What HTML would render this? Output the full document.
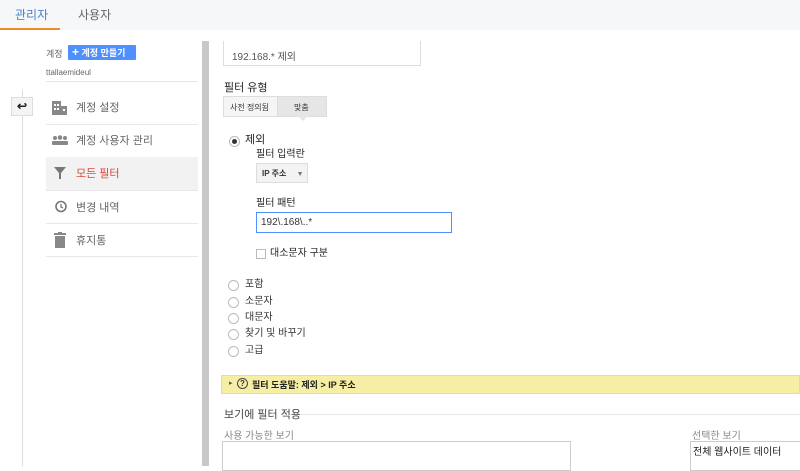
<!DOCTYPE html>
<html><head><meta charset="utf-8"><style>
*{box-sizing:border-box;margin:0;padding:0}
body{width:800px;height:466px;overflow:hidden;background:#fff;font-family:"Liberation Sans","Noto Sans CJK KR",sans-serif;font-size:11px;color:#333;position:relative}
.a{position:absolute}
.radio{position:absolute;width:11px;height:11px;border:1px solid #bbb;border-radius:50%;background:#fff}
</style></head><body>
<div class="a" style="left:0;top:0;width:800px;height:30px;background:#f6f7f8"></div>
<div class="a" style="left:15px;top:6px;font-size:12px;color:#4a80c8">관리자</div>
<div class="a" style="left:78px;top:6px;font-size:12px;color:#666">사용자</div>
<div class="a" style="left:0;top:28px;width:60px;height:2px;background:#f08a24"></div>

<div class="a" style="left:22px;top:90px;width:1px;height:376px;background:#ddd"></div>
<div class="a" style="left:11px;top:97px;width:22px;height:19px;background:#f4f4f4;border:1px solid #ddd;font-size:12px;font-weight:bold;text-align:center;line-height:16px;color:#222">↩</div>

<div class="a" style="left:46px;top:47px;font-size:9px;color:#666">계정</div>
<div class="a" style="left:68px;top:45px;width:68px;height:15px;background:#4d90fe;color:#fff;font-size:9px;font-weight:bold;line-height:15px;padding-left:4px;border-radius:1px"><span style="font-size:12px">+</span> 계정 만들기</div>
<div class="a" style="left:46px;top:68px;font-size:8px;color:#666">ttallaemideul</div>
<div class="a" style="left:46px;top:81px;width:152px;height:1px;background:#e5e5e5"></div>

<div class="a" style="left:46px;top:124px;width:152px;height:1px;background:#e8e8e8"></div>
<div class="a" style="left:46px;top:157px;width:152px;height:34px;background:#f2f2f2"></div>
<div class="a" style="left:46px;top:190px;width:152px;height:1px;background:#e8e8e8"></div>
<div class="a" style="left:46px;top:223px;width:152px;height:1px;background:#e8e8e8"></div>
<div class="a" style="left:46px;top:256px;width:152px;height:1px;background:#e8e8e8"></div>

<svg class="a" style="left:52px;top:100px" width="16" height="16"><rect x="0" y="1" width="9" height="14" fill="#888"/><rect x="9" y="6" width="6" height="9" fill="#888"/><g fill="#fff"><rect x="2" y="4" width="2" height="2"/><rect x="5" y="4" width="2" height="2"/><rect x="2" y="8" width="2" height="2"/><rect x="5" y="8" width="2" height="2"/><rect x="11" y="9" width="2" height="2"/></g></svg>
<div class="a" style="left:76px;top:99px;font-size:11px;color:#666">계정 설정</div>
<svg class="a" style="left:52px;top:135px" width="16" height="10"><circle cx="3" cy="3" r="2" fill="#888"/><circle cx="8" cy="2.5" r="2.3" fill="#888"/><circle cx="13" cy="3" r="2" fill="#888"/><rect x="0" y="6" width="16" height="4" rx="1" fill="#888"/></svg>
<div class="a" style="left:76px;top:132px;font-size:11px;color:#666">계정 사용자 관리</div>
<svg class="a" style="left:54px;top:167px" width="12" height="12"><path d="M0 0H12L7 6V12H5V6Z" fill="#777"/></svg>
<div class="a" style="left:76px;top:165px;font-size:11px;color:#e0483a">모든 필터</div>
<svg class="a" style="left:54px;top:200px" width="13" height="13"><circle cx="7" cy="6.5" r="5" fill="none" stroke="#777" stroke-width="1.6"/><path d="M7 4V7L9 8" stroke="#777" fill="none" stroke-width="1.3"/></svg>
<div class="a" style="left:76px;top:199px;font-size:11px;color:#666">변경 내역</div>
<svg class="a" style="left:54px;top:232px" width="12" height="16"><rect x="0" y="1" width="12" height="2" fill="#888"/><rect x="4" y="0" width="4" height="2" fill="#888"/><rect x="1" y="4" width="10" height="12" fill="#888"/></svg>
<div class="a" style="left:76px;top:232px;font-size:11px;color:#666">휴지통</div>

<div class="a" style="left:202px;top:41px;width:7px;height:425px;background:#c8c8c8"></div>

<div class="a" style="left:223px;top:41px;width:198px;height:25px;border:1px solid #ddd;border-top:none;font-size:10px;color:#555;padding:12px 0 0 8px;line-height:10px;overflow:hidden">192.168.* 제외</div>
<div class="a" style="left:224px;top:79px;font-size:11px;color:#222">필터 유형</div>
<div class="a" style="left:223px;top:96px;width:104px;height:21px;border:1px solid #ddd;background:#f5f5f5"></div>
<div class="a" style="left:277px;top:97px;width:49px;height:19px;background:#e6e6e6;border-left:1px solid #ddd"></div>
<div class="a" style="left:230px;top:102px;font-size:8px;color:#333">사전 정의됨</div>
<div class="a" style="left:294px;top:102px;font-size:8px;color:#333">맞춤</div>
<div class="a" style="left:298px;top:116px;width:0;height:0;border-left:5px solid transparent;border-right:5px solid transparent;border-top:5px solid #e6e6e6"></div>

<div class="radio" style="left:229px;top:136px"></div><div class="a" style="left:232px;top:139px;width:5px;height:5px;border-radius:50%;background:#333"></div>
<div class="a" style="left:245px;top:131px;font-size:11px;color:#222">제외</div>
<div class="a" style="left:256px;top:145px;font-size:10px;color:#222">필터 입력란</div>
<div class="a" style="left:256px;top:163px;width:52px;height:20px;border:1px solid #ddd;background:#f3f3f3;font-size:8px;font-weight:bold;padding:4px 0 0 5px;color:#333">IP 주소 <span style="color:#777;margin-left:8px;font-size:7px">▼</span></div>
<div class="a" style="left:256px;top:194px;font-size:10px;color:#222">필터 패턴</div>
<div class="a" style="left:256px;top:212px;width:196px;height:21px;border:1px solid #4d90fe;font-size:10px;padding:4px 0 0 4px;color:#333">192\.168\..*</div>
<div class="a" style="left:256px;top:249px;width:10px;height:10px;border:1px solid #bbb"></div>
<div class="a" style="left:270px;top:244px;font-size:10px;color:#222">대소문자 구분</div>

<div class="radio" style="left:228px;top:280px"></div><div class="a" style="left:245px;top:275px;font-size:10px">포함</div>
<div class="radio" style="left:228px;top:297px"></div><div class="a" style="left:245px;top:292px;font-size:10px">소문자</div>
<div class="radio" style="left:228px;top:313px"></div><div class="a" style="left:245px;top:308px;font-size:10px">대문자</div>
<div class="radio" style="left:228px;top:329px"></div><div class="a" style="left:245px;top:324px;font-size:10px">찾기 및 바꾸기</div>
<div class="radio" style="left:228px;top:346px"></div><div class="a" style="left:245px;top:341px;font-size:10px">고급</div>

<div class="a" style="left:221px;top:375px;width:579px;height:19px;background:#f7eea6;border:1px solid #e8dc9a"></div>
<div class="a" style="left:229px;top:379px;font-size:7px;color:#555">▸</div>
<div class="a" style="left:237px;top:378px;width:11px;height:11px;border:1px solid #444;border-radius:50%;font-size:8px;text-align:center;line-height:10px;font-weight:bold">?</div>
<div class="a" style="left:252px;top:378px;font-size:9px;font-weight:bold;color:#222">필터 도움말: 제외 &gt; IP 주소</div>

<div class="a" style="left:224px;top:406px;font-size:11px;color:#444">보기에 필터 적용</div>
<div class="a" style="left:300px;top:414px;width:500px;height:1px;background:#e8e8e8"></div>
<div class="a" style="left:224px;top:427px;font-size:10px;color:#888">사용 가능한 보기</div>
<div class="a" style="left:222px;top:441px;width:349px;height:30px;border:1px solid #ccc"></div>
<div class="a" style="left:692px;top:427px;font-size:10px;color:#888">선택한 보기</div>
<div class="a" style="left:690px;top:441px;width:115px;height:30px;border:1px solid #ccc;font-size:10px;color:#222;padding:1px 0 0 2px">전체 웹사이트 데이터</div>
</body></html>
